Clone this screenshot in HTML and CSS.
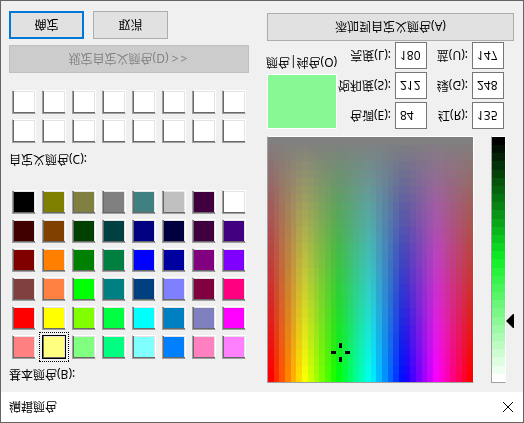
FILE: index.html
```html
<!DOCTYPE html>
<html lang="zh-CN">
<head>
<meta charset="utf-8">
<title>编辑颜色</title>
<link rel="stylesheet" href="styles.css">
</head>
<body>
<div class="dialog">
  <header class="titlebar">
    <span>编辑颜色</span>
    <svg class="close" width="10" height="10" viewBox="0 0 10 10"><path d="M0 0L10 10M10 0L0 10" stroke="#000" stroke-width="1" fill="none"/></svg>
  </header>
  <main class="content">
    <section class="left">
      <div class="label basic-label">基本颜色(B):</div>
      <div class="swatches">
        <i class="swatch c1"></i><i class="swatch c2 selected"></i><i class="swatch c3"></i><i class="swatch c4"></i><i class="swatch c5"></i><i class="swatch c6"></i><i class="swatch c7"></i><i class="swatch c8"></i>
        <i class="swatch c9"></i><i class="swatch c10"></i><i class="swatch c11"></i><i class="swatch c12"></i><i class="swatch c13"></i><i class="swatch c14"></i><i class="swatch c15"></i><i class="swatch c16"></i>
        <i class="swatch c17"></i><i class="swatch c18"></i><i class="swatch c19"></i><i class="swatch c20"></i><i class="swatch c21"></i><i class="swatch c22"></i><i class="swatch c23"></i><i class="swatch c24"></i>
        <i class="swatch c25"></i><i class="swatch c26"></i><i class="swatch c27"></i><i class="swatch c28"></i><i class="swatch c29"></i><i class="swatch c30"></i><i class="swatch c31"></i><i class="swatch c32"></i>
        <i class="swatch c33"></i><i class="swatch c34"></i><i class="swatch c35"></i><i class="swatch c36"></i><i class="swatch c37"></i><i class="swatch c38"></i><i class="swatch c39"></i><i class="swatch c40"></i>
        <i class="swatch c41"></i><i class="swatch c42"></i><i class="swatch c43"></i><i class="swatch c44"></i><i class="swatch c45"></i><i class="swatch c46"></i><i class="swatch c47"></i><i class="swatch c48"></i>
      </div>
      <div class="label custom-label">自定义颜色(C):</div>
      <div class="swatches custom">
        <i class="swatch"></i><i class="swatch"></i><i class="swatch"></i><i class="swatch"></i><i class="swatch"></i><i class="swatch"></i><i class="swatch"></i><i class="swatch"></i>
        <i class="swatch"></i><i class="swatch"></i><i class="swatch"></i><i class="swatch"></i><i class="swatch"></i><i class="swatch"></i><i class="swatch"></i><i class="swatch"></i>
      </div>
      <button class="btn define" disabled>规定自定义颜色(D) <span class="chevrons">&gt;&gt;</span></button>
      <div class="actions">
        <button class="btn ok">确定</button>
        <button class="btn">取消</button>
      </div>
    </section>
    <section class="right">
      <div class="picker">
        <div class="spectrum">
          <canvas id="spectrum" width="205" height="245"></canvas>
          <svg class="cross" width="19" height="19" viewBox="0 0 19 19"><path d="M0 8h5v3H0zM14 8h5v3h-5zM8 0h3v5H8zM8 14h3v5H8z" fill="#000"/></svg>
        </div>
        <div class="lum">
          <canvas id="lum" width="13" height="245"></canvas>
        </div>
        <svg class="arrow" width="8" height="14" viewBox="0 0 8 14"><path d="M0 7L7 0h1v14H7z" fill="#000"/></svg>
      </div>
      <div class="fields">
        <div class="preview-col">
          <div class="preview"></div>
          <div class="label preview-label">颜色|纯色(O)</div>
        </div>
        <div class="form">
          <label>色调(E):</label><input value="84"><label>红(R):</label><input value="135">
          <label>饱和度(S):</label><input value="212"><label>绿(G):</label><input value="248">
          <label>亮度(L):</label><input value="180"><label>蓝(U):</label><input value="147">
        </div>
      </div>
      <button class="btn add">添加到自定义颜色(A)</button>
    </section>
  </main>
</div>
<script src="script.js"></script>
</body>
</html>
```
FILE: styles.css
```css
* { box-sizing: border-box; }
html, body { margin: 0; padding: 0; background: #f0f0f0; overflow: hidden; }
body, button, input { font-family: "Noto Sans", "Noto Sans CJK SC", sans-serif; font-size: 12px; color: #000; }

.dialog {
  width: 524px;
  height: 423px;
  border: 1px solid #646464;
  background: #f0f0f0;
  transform: scaleY(-1);
  display: flex;
  flex-direction: column;
}
.titlebar {
  height: 30px;
  flex: none;
  background: #fff;
  display: flex;
  align-items: center;
  justify-content: space-between;
  padding: 0 10px 0 8px;
}
.content {
  flex: 1;
  display: flex;
  gap: 18px;
  padding: 9px 8px 0;
}
.left { width: 240px; flex: none; display: flex; flex-direction: column; }
.right { flex: 1; display: flex; flex-direction: column; }

.label { height: 17px; line-height: 17px; white-space: nowrap; }
.basic-label { margin-bottom: 7px; }
.custom-label { margin: 22px 0 8px; }

.swatches {
  display: grid;
  grid-template-columns: repeat(8, 24px);
  grid-auto-rows: 24px;
  column-gap: 6px;
  row-gap: 5px;
  margin-left: 3px;
}
.swatch {
  display: block;
  position: relative;
  background: #fff;
  border: 1px solid;
  border-color: #a0a0a0 #fff #fff #a0a0a0;
  box-shadow: inset 1px 1px 0 #696969, inset -1px -1px 0 #e3e3e3;
}
.swatch.selected { border-color: #000; box-shadow: inset 1px 1px 0 #696969, inset -1px -1px 0 #e3e3e3; }
.swatch.selected::after {
  content: "";
  position: absolute;
  inset: -4px;
  border: 1px dotted #000;
}
.c1{background:#ff8080}.c2{background:#ffff80}.c3{background:#80ff80}.c4{background:#00ff80}.c5{background:#80ffff}.c6{background:#0080ff}.c7{background:#ff80c0}.c8{background:#ff80ff}
.c9{background:#ff0000}.c10{background:#ffff00}.c11{background:#80ff00}.c12{background:#00ff40}.c13{background:#00ffff}.c14{background:#0080c0}.c15{background:#8080c0}.c16{background:#ff00ff}
.c17{background:#804040}.c18{background:#ff8040}.c19{background:#00ff00}.c20{background:#008080}.c21{background:#004080}.c22{background:#8080ff}.c23{background:#800040}.c24{background:#ff0080}
.c25{background:#800000}.c26{background:#ff8000}.c27{background:#008000}.c28{background:#008040}.c29{background:#0000ff}.c30{background:#0000a0}.c31{background:#800080}.c32{background:#8000ff}
.c33{background:#400000}.c34{background:#804000}.c35{background:#004000}.c36{background:#004040}.c37{background:#000080}.c38{background:#000040}.c39{background:#400040}.c40{background:#400080}
.c41{background:#000000}.c42{background:#808000}.c43{background:#808040}.c44{background:#808080}.c45{background:#408080}.c46{background:#c0c0c0}.c47{background:#400040}.c48{background:#ffffff}

.btn {
  height: 28px;
  padding: 0;
  background: #e1e1e1;
  border: 1px solid #adadad;
  border-radius: 0;
  display: block;
}
.define {
  width: 240px;
  margin-top: 17px;
  background: #cccccc;
  border-color: #bfbfbf;
  color: #838383;
}
.chevrons { letter-spacing: 2px; }
.actions { display: flex; gap: 9px; margin-top: 6px; }
.actions .btn { width: 75px; }
.ok { border: 2px solid #0078d7; }

.picker { display: flex; align-items: flex-start; height: 247px; position: relative; }
.spectrum {
  position: relative;
  width: 207px;
  height: 247px;
  border: 1px solid;
  border-color: #a0a0a0 #fff #fff #a0a0a0;
}
.spectrum canvas, .lum canvas { display: block; }
.cross { position: absolute; left: 63px; top: 20px; }
.lum {
  width: 15px;
  height: 247px;
  margin-left: 17px;
  border: 1px solid;
  border-color: #a0a0a0 #fff #fff #a0a0a0;
}
.arrow { position: absolute; left: 239px; top: 55px; }

.fields { display: flex; margin-top: 7px; }
.preview-col { width: 70px; flex: none; }
.preview { width: 70px; height: 55px; background: #87f893; border: 1px solid #fff; }
.preview-label { margin: 3px 0 0 -1px; }
.form {
  display: grid;
  grid-template-columns: 58px 32px 45px 32px;
  grid-auto-rows: 27px;
  row-gap: 3px;
}
.form label { text-align: right; padding-right: 4px; line-height: 27px; white-space: nowrap; }
.form input {
  width: 32px;
  height: 27px;
  border: 1px solid #767676;
  padding: 0 0 0 4px;
  background: #fff;
  outline: none;
  border-radius: 0;
}
.add { width: 247px; margin-top: 1px; }
```
FILE: script.js
```javascript
function hls(h, l, s) {
  h /= 240; l /= 240; s /= 240;
  var q = l < 0.5 ? l * (1 + s) : l + s - l * s;
  var p = 2 * l - q;
  function c(t) {
    t = (t + 1) % 1;
    if (t < 1 / 6) return p + (q - p) * 6 * t;
    if (t < 1 / 2) return q;
    if (t < 2 / 3) return p + (q - p) * (2 / 3 - t) * 6;
    return p;
  }
  return "rgb(" + Math.round(c(h + 1 / 3) * 255) + "," + Math.round(c(h) * 255) + "," + Math.round(c(h - 1 / 3) * 255) + ")";
}
var sp = document.getElementById("spectrum").getContext("2d");
var cols = 36, rows = 30, W = 205, H = 245;
for (var j = 0; j < rows; j++) {
  for (var i = 0; i < cols; i++) {
    sp.fillStyle = hls(i * 240 / (cols - 1), 120, 240 - j * 240 / (rows - 1));
    var x0 = Math.round(i * W / cols), x1 = Math.round((i + 1) * W / cols);
    var y0 = Math.round(j * H / rows), y1 = Math.round((j + 1) * H / rows);
    sp.fillRect(x0, y0, x1 - x0, y1 - y0);
  }
}
var lu = document.getElementById("lum").getContext("2d");
for (var k = 0; k < rows; k++) {
  lu.fillStyle = hls(84, 240 - k * 240 / (rows - 1), 212);
  var a = Math.round(k * H / rows), b = Math.round((k + 1) * H / rows);
  lu.fillRect(0, a, 13, b - a);
}
```
